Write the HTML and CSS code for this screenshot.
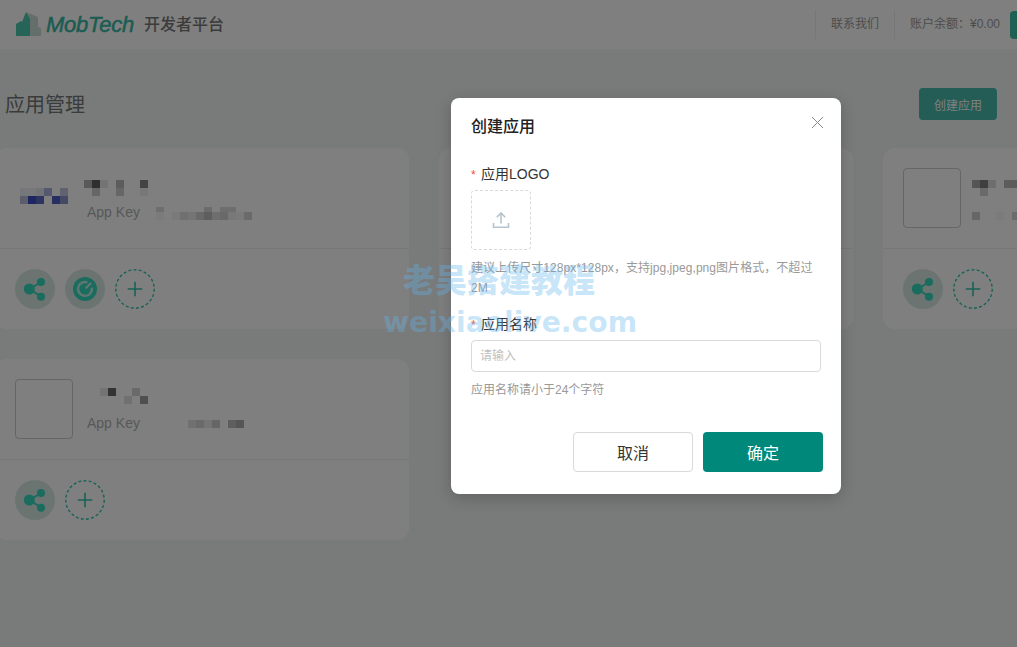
FILE: index.html
```html
<!DOCTYPE html>
<html lang="zh-CN">
<head>
<meta charset="utf-8">
<title>应用管理</title>
<link rel="stylesheet" href="styles.css">
</head>
<body>
<header class="topbar">
  <div class="brand">
    <svg class="brand-mark" width="26" height="25" viewBox="0 0 26 25">
      <polygon class="mark-light" points="10,0 22,5 22,15 25,16 25,24 14,24"/>
      <polygon class="mark-dark" points="0,24 0,12 5,9 6,10 10,0 14,7 14,24"/>
    </svg>
    <span class="brand-name">MobTech</span>
    <span class="brand-sub">开发者平台</span>
  </div>
  <div class="top-right">
    <span class="top-item top-contact">联系我们</span>
    <span class="top-item">账户余额：¥0.00</span>
    <button class="top-btn" type="button">充值</button>
  </div>
</header>

<main class="main">
  <div class="title-row">
    <h1 class="page-title">应用管理</h1>
    <button class="create-btn" type="button">创建应用</button>
  </div>
  <section class="cards">
    <article class="card">
      <div class="card-top">
        <svg class="logo-plain" width="58" height="60" viewBox="0 0 58 60">
          <g transform="translate(5 20)">
            <rect width="8" height="8" x="0" y="0" fill="#eceff4"/><rect width="8" height="8" x="8" y="0" fill="#f0f0f4"/><rect width="8" height="8" x="16" y="0" fill="#e4e6f0"/><rect width="8" height="8" x="24" y="0" fill="#aab0dc"/><rect width="8" height="8" x="40" y="0" fill="#c0c4e0"/>
            <rect width="8" height="8" x="0" y="8" fill="#b8bcd8"/><rect width="8" height="8" x="8" y="8" fill="#3a4cc0"/><rect width="8" height="8" x="16" y="8" fill="#5c68c4"/><rect width="8" height="8" x="32" y="8" fill="#4c5cc4"/><rect width="8" height="8" x="40" y="8" fill="#8a92c8"/>
          </g>
        </svg>
        <div class="info">
          <svg class="name-mosaic" width="64" height="36" viewBox="0 0 64 36">
            <rect x="0" y="12" width="8" height="8" fill="#b2b2b2"/><rect x="8" y="12" width="8" height="8" fill="#5e5e5e"/><rect x="16" y="12" width="8" height="8" fill="#e8e8e8"/><rect x="32" y="12" width="8" height="8" fill="#b8b8b8"/><rect x="56" y="12" width="8" height="8" fill="#868686"/>
            <rect x="8" y="20" width="8" height="8" fill="#cccccc"/><rect x="32" y="20" width="8" height="8" fill="#cccccc"/><rect x="56" y="20" width="8" height="8" fill="#f0f0f0"/>
          </svg>
          <div class="key-row">
            <span class="key-label">App Key</span>
            <svg width="104" height="16" viewBox="0 0 104 16">
              <rect x="8" y="3" width="8" height="5" fill="#dcdcdc"/><rect x="8" y="8" width="8" height="8" fill="#f6f6f6"/><rect x="56" y="3" width="8" height="5" fill="#d8d8d8"/><rect x="72" y="3" width="16" height="5" fill="#dcdcdc"/>
              <rect x="24" y="8" width="8" height="8" fill="#f4f4f4"/><rect x="32" y="8" width="8" height="8" fill="#e0e0e0"/><rect x="40" y="8" width="8" height="8" fill="#eaeaea"/><rect x="48" y="8" width="8" height="8" fill="#d2d2d2"/><rect x="56" y="8" width="8" height="8" fill="#bcbcbc"/><rect x="64" y="8" width="8" height="8" fill="#dcdcdc"/><rect x="72" y="8" width="8" height="8" fill="#d2d2d2"/><rect x="80" y="8" width="8" height="8" fill="#f0f0f0"/><rect x="88" y="8" width="8" height="8" fill="#f4f4f4"/><rect x="96" y="8" width="8" height="8" fill="#d4d4d4"/>
            </svg>
          </div>
        </div>
      </div>
      <div class="card-actions">
        <span class="round"><svg width="40" height="40" viewBox="0 0 40 40"><use href="#share"/></svg></span>
        <span class="round"><svg width="40" height="40" viewBox="0 0 40 40"><circle class="t-fill" cx="20" cy="20" r="12"/><path class="ring" d="M22.4 13.4A7 7 0 1 0 26.9 18.8"/><path class="ring-tick" d="M20.5 19.5L26 14"/></svg></span>
        <svg class="add" width="40" height="40" viewBox="0 0 40 40"><use href="#add"/></svg>
      </div>
    </article>

    <article class="card">
      <div class="card-top"></div>
      <div class="card-actions"></div>
    </article>

    <article class="card">
      <div class="card-top">
        <div class="logo-box"></div>
        <div class="info">
          <svg class="name-mosaic" width="64" height="36" viewBox="0 0 64 36">
            <rect x="0" y="12" width="8" height="8" fill="#aaaaaa"/><rect x="8" y="12" width="8" height="8" fill="#7e7e7e"/><rect x="16" y="12" width="8" height="8" fill="#dcdcdc"/><rect x="32" y="12" width="13" height="8" fill="#b8b8b8"/>
            <rect x="8" y="20" width="8" height="8" fill="#d4d4d4"/>
          </svg>
          <svg class="name-mosaic" width="64" height="16" viewBox="0 0 64 16">
            <rect x="0" y="8" width="8" height="8" fill="#cccccc"/><rect x="24" y="8" width="8" height="8" fill="#f6f6f6"/><rect x="40" y="8" width="8" height="8" fill="#d8d8d8"/>
          </svg>
        </div>
      </div>
      <div class="card-actions">
        <span class="round"><svg width="40" height="40" viewBox="0 0 40 40"><use href="#share"/></svg></span>
        <svg class="add" width="40" height="40" viewBox="0 0 40 40"><use href="#add"/></svg>
      </div>
    </article>

    <article class="card">
      <div class="card-top">
        <div class="logo-box"></div>
        <div class="info">
          <svg class="name-mosaic" width="64" height="36" viewBox="0 0 64 36">
            <rect x="16" y="9" width="8" height="8" fill="#e8e8e8"/><rect x="24" y="9" width="8" height="8" fill="#666666"/><rect x="48" y="9" width="8" height="8" fill="#d4d4d4"/>
            <rect x="40" y="17" width="8" height="8" fill="#e0e0e0"/><rect x="56" y="17" width="8" height="8" fill="#9e9e9e"/>
          </svg>
          <div class="key-row">
            <span class="key-label">App Key</span>
            <svg width="104" height="16" viewBox="0 0 104 16">
              <rect x="40" y="5" width="8" height="8" fill="#e0e0e0"/><rect x="48" y="5" width="8" height="8" fill="#d4d4d4"/><rect x="56" y="5" width="8" height="8" fill="#eaeaea"/><rect x="64" y="5" width="8" height="8" fill="#cccccc"/><rect x="80" y="5" width="8" height="8" fill="#bcbcbc"/><rect x="88" y="5" width="8" height="8" fill="#aaaaaa"/>
            </svg>
          </div>
        </div>
      </div>
      <div class="card-actions">
        <span class="round"><svg width="40" height="40" viewBox="0 0 40 40"><use href="#share"/></svg></span>
        <svg class="add" width="40" height="40" viewBox="0 0 40 40"><use href="#add"/></svg>
      </div>
    </article>
  </section>
</main>

<svg class="defs" width="0" height="0">
  <defs>
    <g id="share">
      <path class="t-line" d="M14.5 20L26 13M14.5 20L26 27.7"/>
      <circle class="t-fill" cx="14.3" cy="20" r="5.5"/>
      <circle class="t-fill" cx="26" cy="13" r="4"/>
      <circle class="t-fill" cx="26" cy="27.7" r="4"/>
    </g>
    <g id="add">
      <circle class="add-ring" cx="20" cy="20" r="19.2"/>
      <path class="add-plus" d="M12.7 20H27.3M20 12.7V27.3"/>
    </g>
  </defs>
</svg>

<div class="overlay"></div>

<div class="modal">
  <h2 class="modal-title">创建应用</h2>
  <svg class="modal-close" width="13" height="13" viewBox="0 0 13 13"><path d="M1 1L12 12M12 1L1 12"/></svg>
  <div class="field-label first"><span class="star">*</span>应用LOGO</div>
  <div class="upload">
    <svg width="18" height="18" viewBox="0 0 18 18"><path d="M9 12.5V2M4.8 6.2L9 2L13.2 6.2M1.5 12V16.3H16.5V12"/></svg>
  </div>
  <p class="help help-long">建议上传尺寸128px*128px，支持jpg,jpeg,png图片格式，不超过2M</p>
  <div class="field-label"><span class="star">*</span>应用名称</div>
  <input class="text-input" type="text" placeholder="请输入">
  <p class="help">应用名称请小于24个字符</p>
  <div class="modal-footer">
    <button class="btn btn-cancel" type="button">取消</button>
    <button class="btn btn-ok" type="button">确定</button>
  </div>
</div>

<div class="watermark wm-cn">老吴搭建教程</div>
<div class="watermark wm-en">weixiaolive.com</div>
</body>
</html>
```
FILE: styles.css
```css
* { box-sizing: border-box; }
html, body { margin: 0; padding: 0; height: 100%; }
body {
  width: 1017px;
  height: 647px;
  overflow: hidden;
  position: relative;
  background: #f0f6f4;
  font-family: "Liberation Sans", "Noto Sans CJK SC", sans-serif;
  color: #333;
}
button { font-family: inherit; cursor: pointer; }

.topbar {
  width: 1090px;
  height: 50px;
  display: flex;
  align-items: center;
  justify-content: space-between;
  background: #fff;
  border-bottom: 1px solid #f6f6f6;
  padding-left: 16px;
}
.brand { display: flex; align-items: center; }
.brand-mark { display: block; margin-top: -1px; }
.mark-dark { fill: #4cc8b0; }
.mark-light { fill: #c8ded8; }
.brand-name {
  margin-left: 4px;
  width: 88px;
  font-family: "Liberation Sans", sans-serif;
  font-style: italic;
  font-weight: 400;
  font-size: 22px;
  line-height: 24px;
  -webkit-text-stroke: 0.5px #38b8a4;
  color: #38b8a4;
  letter-spacing: -0.25px;
}
.brand-sub {
  margin-left: 10px;
  font-size: 16px;
  font-weight: 500;
  line-height: 24px;
  color: #787878;
}
.top-right { display: flex; align-items: center; }
.top-item {
  height: 29px;
  line-height: 29px;
  padding: 0 15px;
  border-left: 1px solid #eeeeee;
  font-size: 12px;
  color: #999;
}
.top-item + .top-item { padding-right: 10px; }
.top-btn {
  width: 80px;
  height: 28px;
  border: 0;
  border-radius: 4px;
  background: #3cc0a8;
  color: #fff;
  font-size: 12px;
}

.main { margin-left: -5px; width: 1302px; }
.title-row {
  width: 1002px;
  margin-top: 38px;
  padding-left: 10px;
  height: 32px;
  display: flex;
  align-items: center;
  justify-content: space-between;
}
.page-title {
  margin: 2px 0 0;
  font-size: 20px;
  font-weight: 400;
  line-height: 30px;
  color: #777;
}
.create-btn {
  width: 78px;
  height: 32px;
  border: 0;
  border-radius: 4px;
  background: #46baaa;
  color: #fff;
  font-size: 12px;
}
.cards {
  margin-top: 28px;
  display: grid;
  grid-template-columns: repeat(3, 414px);
  gap: 30px;
}
.card {
  height: 181px;
  background: #fff;
  border-radius: 12px;
}
.card-top {
  height: 101px;
  padding: 20px 20px 0;
  border-bottom: 1px solid #eeeeee;
  display: flex;
  gap: 14px;
}
.logo-plain { display: block; flex: none; }
.logo-box {
  flex: none;
  width: 58px;
  height: 60px;
  border: 1px solid #cccccc;
  border-radius: 4px;
}
.info { display: flex; flex-direction: column; }
.name-mosaic { display: block; margin-left: -3px; }
.key-row { display: flex; gap: 8px; height: 16px; align-items: center; }
.key-label { font-size: 14px; line-height: 16px; color: #b0b0b0; }
.key-row svg { display: block; }

.card-actions {
  padding: 20px;
  display: flex;
  gap: 10px;
}
.round {
  display: block;
  width: 40px;
  height: 40px;
  border-radius: 50%;
  background: #d8e8e4;
}
.round svg, .add { display: block; }
.t-fill { fill: #34d8bc; }
.t-line { stroke: #34d8bc; stroke-width: 2; fill: none; }
.ring { fill: none; stroke: #b8ece0; stroke-width: 2.6; }
.ring-tick { fill: none; stroke: #d4ece6; stroke-width: 2; }
.add-ring { fill: none; stroke: #34c4ae; stroke-width: 1.4; stroke-dasharray: 3 2.2; }
.add-plus { fill: none; stroke: #34c4ae; stroke-width: 1.6; }
.defs { position: absolute; }

.overlay {
  position: absolute;
  inset: 0;
  background: rgba(0, 0, 0, 0.5);
}
.modal {
  position: absolute;
  left: 451px;
  top: 98px;
  width: 390px;
  height: 396px;
  padding: 17px 20px 0;
  background: #fff;
  border-radius: 8px;
  box-shadow: 0 4px 16px rgba(0, 0, 0, 0.2);
}
.modal-title {
  margin: 0;
  font-size: 16px;
  font-weight: 500;
  line-height: 24px;
  color: #222;
}
.modal-close {
  position: absolute;
  right: 17px;
  top: 18px;
}
.modal-close path { stroke: #888; stroke-width: 1; fill: none; }
.field-label {
  margin-top: 16px;
  height: 20px;
  font-size: 14px;
  line-height: 20px;
  color: #333;
}
.field-label.first { margin-top: 25px; }
.star {
  display: inline-block;
  width: 10px;
  font-size: 12px;
  line-height: 12px;
  color: #f5503c;
}
.upload {
  margin-top: 6px;
  width: 60px;
  height: 60px;
  border: 1px dashed #d9d9d9;
  border-radius: 4px;
  display: flex;
  align-items: center;
  justify-content: center;
}
.upload path { fill: none; stroke: #b6c4cd; stroke-width: 1.6; }
.help {
  margin: 8px 0 0;
  font-size: 12px;
  line-height: 20px;
  color: #999;
}
.help-long { letter-spacing: 0.05px; }
.text-input {
  display: block;
  margin-top: 6px;
  width: 350px;
  height: 32px;
  padding: 0 8px;
  border: 1px solid #d9d9dd;
  border-radius: 4px;
  font-family: inherit;
  font-size: 12px;
  outline: none;
}
.text-input::placeholder { color: #bfbfbf; }
.modal-footer {
  margin: 32px -2px 0 0;
  display: flex;
  justify-content: flex-end;
  gap: 10px;
}
.btn {
  width: 120px;
  height: 40px;
  border-radius: 4px;
  font-size: 16px;
}
.btn-cancel { background: #fff; border: 1px solid #d9d9d9; color: #333; }
.btn-ok { background: #00897b; border: 0; color: #fff; }

.watermark {
  position: absolute;
  font-weight: 700;
  color: rgba(100, 180, 235, 0.36);
  white-space: nowrap;
  pointer-events: none;
}
.wm-cn {
  left: 403px;
  top: 258px;
  font-size: 32px;
  line-height: 40px;
  font-family: "Noto Sans CJK SC", sans-serif;
  font-weight: 900;
}
.wm-en {
  left: 383px;
  top: 303px;
  font-size: 28.2px;
  line-height: 40px;
  font-family: "DejaVu Sans", sans-serif;
}
```
